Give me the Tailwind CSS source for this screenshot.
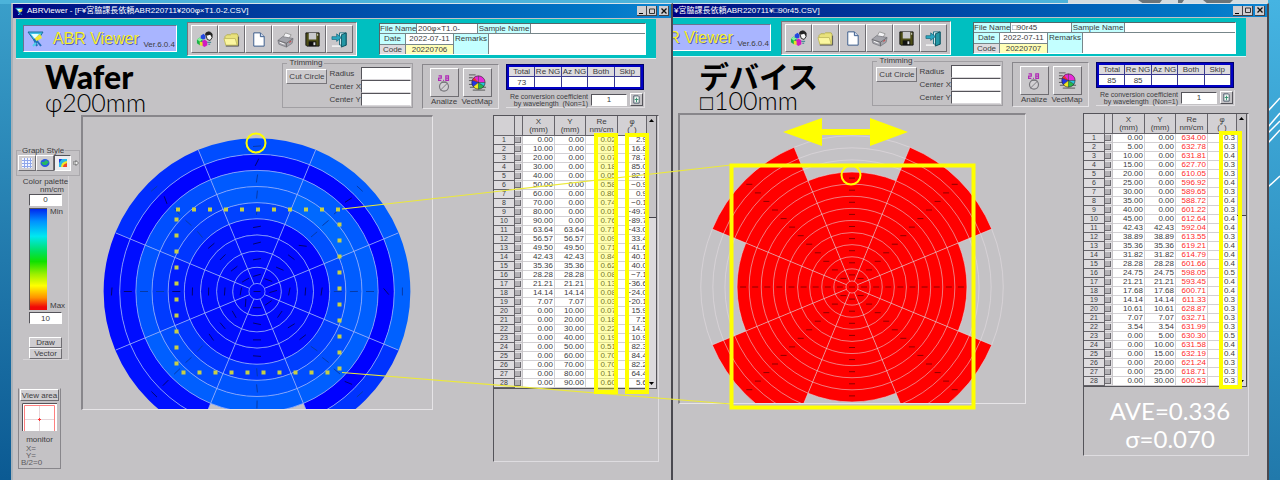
<!DOCTYPE html>
<html lang="ja">
<head>
  <meta charset="UTF-8" />
  <meta name="viewport" content="width=device-width, initial-scale=1.0">
  <title>ABR Viewer</title>
  <script src="https://cdn.jsdelivr.net/npm/@tailwindcss/browser@4"></script>
</head>
<body class="relative min-h-screen overflow-hidden bg-linear-to-b from-[#3a9fca] to-[#0b5a93] font-['Liberation_Sans','Noto_Sans_CJK_JP',sans-serif] text-[8px] leading-[9px] text-[#3c3c40]">

  <!-- slide backdrop -->
  <div class="absolute inset-x-0 top-0 h-[4px] bg-[#4cb3da]"></div>
  <div class="absolute top-0 right-[12px] h-[4px] w-[200px] bg-[#d3dce0]"></div>
  <svg class="absolute top-0 right-0 h-[480px] w-[212px]" viewBox="0 0 212 480">
    <defs><linearGradient id="edge" x1="0" y1="0" x2="0" y2="1"><stop offset="0" stop-color="#45b4e2" /><stop offset="1" stop-color="#2179ab" /></linearGradient></defs>
    <rect x="200" width="12" height="480" fill="url(#edge)" />
    <path d="M200 111l12-13M200 127l12-14M200 133l12-12M200 143l12-13M200 187l12-11" stroke="#fff" stroke-width="1.5" />
    <path d="M70 0h24l-3 4H76zM110 0h6l-2 3h-4zM135 0h30l-4 4h-21z" fill="#6b7478" />
  </svg>

  <svg class="hidden">
    <symbol id="logo" viewBox="0 0 18 18">
      <path d="M1 2h15l-7 11z" fill="#3fc4e8" stroke="#1c6d9c" />
      <path d="M4 4h8l-4 5z" fill="#eaffff" /><path d="M7 9l6-5 2 4-5 3z" fill="#f2e63a" />
      <path d="M7 9l3 7M10 11l4 5" stroke="#1f6fb8" stroke-width="2" /><path d="M6 16l3-3" stroke="#4fd0ea" stroke-width="2" />
    </symbol>
    <symbol id="ic-data" viewBox="0 0 18 18">
      <path d="M1 9l3-2 3 2v4l-3 2-3-2z" fill="#19b34a" /><path d="M1 9l3-2 3 2-3 2z" fill="#8af0a0" />
      <path d="M5 5l3-2 2 2v3l-2 1-3-1z" fill="#2347e0" /><path d="M6 11l3-2 3 2v4l-3 2-3-2z" fill="#d11bc0" /><path d="M4 11l3 1v4l-3-1z" fill="#e8e02a" />
      <path d="M10 3q4-4 7 0v4l-2 3-3-1z" fill="#f7f7f7" stroke="#222" /><path d="M10 2q4-3 7 1v4l-2-3-4 1z" fill="#222" /><path d="M12 12h4M13 14h2" stroke="#2a7a8a" />
    </symbol>
    <symbol id="ic-folder" viewBox="0 0 18 18">
      <path d="M2 6l2-2h4l1-1h6l1 2v10H3z" fill="#e9e27c" stroke="#b5ae55" /><path d="M1 8h12l2 7H3z" fill="#fbf6a0" stroke="#c4bd62" /><path d="M3 16h13.500V6" stroke="#555" fill="none" />
    </symbol>
    <symbol id="ic-page" viewBox="0 0 18 18">
      <path d="M4 2h7l4 4v10H4z" fill="#fff" stroke="#36598a" /><path d="M11 2v4h4" fill="#cfdcef" stroke="#36598a" />
    </symbol>
    <symbol id="ic-printer" viewBox="0 0 18 18">
      <path d="M6 7l3-5 6 2-3 5z" fill="#f4f4f6" stroke="#999" /><path d="M1 10l5-4 11 2-1 5-6 4-8-3z" fill="#a3a3aa" stroke="#85858b" />
      <path d="M1 10l9 3 7-5M10 13v4" fill="none" stroke="#6b6b70" /><path d="M3 12l5 2" stroke="#fff" /><path d="M13 12l2-1" stroke="#d33" />
    </symbol>
    <symbol id="ic-save" viewBox="0 0 18 18">
      <path d="M2 2h14v14H3l-1-1z" fill="#4d4d16" stroke="#111" /><path d="M5 2h8v7H5z" fill="#c9c9cc" /><path d="M5 11h8v5H5z" fill="#111" /><path d="M10 12h2v3h-2z" fill="#ddd" /><path d="M14 3h1v2h-1z" fill="#ddd" />
    </symbol>
    <symbol id="ic-exit" viewBox="0 0 18 18">
      <path d="M9 2h7v13H9z" fill="#e8fbff" stroke="#1b6f80" /><path d="M11 4l5-2v13l-5 2z" fill="#2397a5" stroke="#0d4f5c" /><path d="M1 6h5V3l5 4-5 4V9H1z" fill="#2ba7c0" stroke="#14647a" stroke-width=".7" /><path d="M1 16h9" stroke="#f8f8f8" stroke-width="1.500" />
    </symbol>
    <symbol id="ic-analize" viewBox="0 0 20 22">
      <path d="M4 3h3v2.500H4V8h3M9 8h1M12 3h3v5h-3zM12 5.500h3" fill="none" stroke="#b02ab5" stroke-width="1.300" />
      <circle cx="10" cy="15" r="5" fill="#d2d0d3" stroke="#77767b" stroke-width="1.300" /><path d="M6 19l8-8M7 10h6" stroke="#77767b" />
    </symbol>
    <symbol id="ic-vect" viewBox="0 0 20 20">
      <path d="M1 2h7M1 5h4M1 8h4M1 12h5M2 15h6M5 18h13M15 15h4" stroke="#555" />
      <path d="M11 10V3a7 7 0 0 1 7 7z" fill="#e62ad8" /><path d="M11 10L4.500 7.500A7 7 0 0 1 11 3z" fill="#e62ad8" /><path d="M11 10L5.500 14.500A7 7 0 0 1 4.500 7.500z" fill="#2233e6" /><path d="M11 10L4.500 7.500l2-3z" fill="#e33" />
      <path d="M11 10v7a7 7 0 0 1-5.500-2.500z" fill="#f3ea22" /><path d="M11 10l6 4a7 7 0 0 1-6 3z" fill="#23b84a" /><path d="M11 10h7a7 7 0 0 1-1 4z" fill="#26c7dd" />
      <path d="M11 3v14M4.500 7.500L11 10h7M5.500 14.500L11 10l6 4" stroke="#222" stroke-width=".5" fill="none" />
      <circle cx="11" cy="10" r="7" fill="none" stroke="#222" stroke-width=".6" />
    </symbol>
    <symbol id="ic-calc" viewBox="0 0 10 10">
      <path d="M2 1h5l1 1v7H2z" fill="#eef5f0" stroke="#456" /><path d="M3 5h4M5 3v5" stroke="#2f8f6a" />
    </symbol>
  </svg>

  <main id="windows" class="relative grid h-screen grid-cols-[662fr_596fr] pt-[3px] pr-[11px] pl-[11px]"></main>

  <!-- annotations laid over both windows -->
  <svg class="pointer-events-none absolute top-0 left-0 h-[480px] w-[1280px]" viewBox="0 0 1280 480" fill="none" stroke="#ffff00">
    <g stroke="#c8cf45" stroke-width="4">
      <path d="M176 209.500H342" stroke-dasharray="4 12" />
      <path d="M339.500 222.500V372" stroke-dasharray="4 12" />
      <path d="M181.500 372.500H331" stroke-dasharray="4 12" />
      <path d="M176.500 217.500V367" stroke-dasharray="4 12" />
    </g>
    <path d="M342 209L731 165M342 372.500L731 404" stroke="#ece93a" stroke-width="1.200" />
    <circle cx="256" cy="143" r="9.500" stroke-width="2" />
    <circle cx="851" cy="175" r="9.500" stroke-width="2" />
    <rect x="731.500" y="165.500" width="242" height="242" stroke-width="4" />
    <path d="M783 132l39-14v11h48v-11l38 14-38 14v-11h-48v11z" fill="#ffff00" stroke="none" />
    <rect x="596" y="135" width="20" height="257" fill="#ffff00" fill-opacity=".3" stroke-width="4" />
    <rect x="627" y="135" width="20" height="257" stroke-width="4" />
    <rect x="1221" y="133" width="19" height="254" stroke-width="4" />
  </svg>

  <script>
    const wafer = {
      id: "w",
      frame: "pr-[12px] pl-[3px]",
      titleText: "ABRViewer - [F¥宮脇課長依頼ABR220711¥200φ×T1.0-2.CSV]",
      titlePad: "-mr-[12px] -ml-[3px] pl-[2px] h-[14px]",
      icon: true,
      headH: "h-[40px]",
      formW: "w-[267px]",
      heading: "Wafer", headingClass: "font-['Lato'] text-[32px] leading-[32px] font-black text-black",
      sub: "φ200mm", headPad: "pl-[29px] pt-[2px]",
      toolsH: "h-[56px]",
      file: "200φ×T1.0-", code: "20220706", counts: ["73", "", "", "", ""],
      sidebar: true,
      graphBox: "w-[352px] h-[295px]",
      listH: "h-[347px]",
      red: false, note: ""
    };
    const device = {
      id: "d",
      frame: "pr-[18px] pl-0",
      titleText: "¥宮脇課長依頼ABR220711¥□90r45.CSV]",
      titlePad: "-mr-[18px] pl-[1px] h-[13px]",
      icon: false,
      headH: "h-[39px]",
      formW: "w-[263px]",
      heading: "デバイス", headingClass: "font-['Noto_Sans_CJK_JP'] text-[30px] leading-[32px] font-bold text-black",
      sub: "□100mm", headPad: "pl-[26px] pt-[2px]",
      toolsH: "h-[56px]",
      file: "□90r45", code: "20220707", counts: ["85", "85", "", "", ""],
      sidebar: false,
      graphBox: "w-[348px] h-[291px]",
      listH: "h-[343px]",
      red: true, note: "AVE=0.336<br>σ=0.070"
    };

    wafer.rows = `0.00 0.00 0.02 2.9|10.00 0.00 0.01 16.8|20.00 0.00 0.07 78.7|30.00 0.00 0.18 85.0|40.00 0.00 0.05 82.1|50.00 0.00 0.58 −0.9|60.00 0.00 0.80 0.9|70.00 0.00 0.74 −0.1|80.00 0.00 0.01 −49.7|90.00 0.00 0.76 −89.7|63.64 63.64 0.71 −43.0|56.57 56.57 0.09 33.4|49.50 49.50 0.71 41.6|42.43 42.43 0.84 40.1|35.36 35.36 0.62 40.0|28.28 28.28 0.08 −7.1|21.21 21.21 0.13 −36.6|14.14 14.14 0.08 −24.0|7.07 7.07 0.03 −20.1|0.00 10.00 0.07 15.9|0.00 20.00 0.18 7.5|0.00 30.00 0.22 14.7|0.00 40.00 0.19 10.9|0.00 50.00 0.51 82.3|0.00 60.00 0.70 84.4|0.00 70.00 0.70 82.2|0.00 80.00 0.17 64.4|0.00 90.00 0.60 5.6`;
    device.rows = `0.00 0.00 634.00 0.3|5.00 0.00 632.78 0.3|10.00 0.00 631.81 0.4|15.00 0.00 627.70 0.3|20.00 0.00 610.05 0.3|25.00 0.00 596.92 0.4|30.00 0.00 589.65 0.3|35.00 0.00 588.72 0.4|40.00 0.00 601.22 0.3|45.00 0.00 612.64 0.4|42.43 42.43 592.04 0.4|38.89 38.89 613.55 0.3|35.36 35.36 619.21 0.4|31.82 31.82 614.79 0.4|28.28 28.28 601.66 0.4|24.75 24.75 598.05 0.5|21.21 21.21 593.45 0.4|17.68 17.68 600.71 0.4|14.14 14.14 611.33 0.3|10.61 10.61 628.87 0.3|7.07 7.07 632.71 0.3|3.54 3.54 631.99 0.3|0.00 5.00 630.30 0.5|0.00 10.00 631.58 0.4|0.00 15.00 632.19 0.4|0.00 20.00 621.24 0.3|0.00 25.00 618.71 0.3|0.00 30.00 600.53 0.3`;

    const polar = (cx, cy, r, deg) => {
      const a = deg * Math.PI / 180;
      return `${(cx + r * Math.cos(a)).toFixed(1)} ${(cy - r * Math.sin(a)).toFixed(1)}`;
    };

    function wedge(cx, cy, r0, r1, deg, fill) {
      const a = deg - 22.5, b = deg + 22.5;
      return `<path fill="${fill}" d="M${polar(cx, cy, r0, a)}L${polar(cx, cy, r1, a)}A${r1} ${r1} 0 0 0 ${polar(cx, cy, r1, b)}L${polar(cx, cy, r0, b)}A${r0} ${r0} 0 0 1 ${polar(cx, cy, r0, a)}z"/>`;
    }

    function tick(cx, cy, r, deg, tilt, len, color) {
      const [x, y] = polar(cx, cy, r, deg).split(" ").map(Number);
      const dx = len / 2 * Math.cos(tilt * Math.PI / 180), dy = len / 2 * Math.sin(tilt * Math.PI / 180);
      return `<path stroke="${color}" d="M${(x - dx).toFixed(1)} ${(y + dy).toFixed(1)}L${(x + dx).toFixed(1)} ${(y - dy).toFixed(1)}"/>`;
    }

    function waferMap() {
      const cx = 174, cy = 174.5, p = 16.15;
      // retardation per sector, ring 1 (inner) to 9 (outer), counter-clockwise from east
      const re = [
        [.01, .07, .12, .05, .58, .72, .74, .01, .76],
        [.03, .08, .06, .03, .62, .82, .71, .03, .71],
        [.07, .1, .12, .12, .51, .7, .7, .1, .6],
        [.08, .1, .16, .14, .42, .5, .62, .02, .35],
        [.07, .1, .1, .12, .22, .46, .66, .1, .08],
        [.05, .07, .1, .12, .42, .6, .74, .1, .13],
        [.05, .04, .07, .1, .42, .66, .74, null, null],
        [.04, .08, .1, .1, .48, .6, .74, .01, .4]
      ];
      const phi = [
        [16, 78, 85, 82, 0, 1, 0, -50, -90],
        [-20, -24, -36, -7, 40, 40, 41, 33, -43],
        [16, 8, 15, 10, 82, 84, 82, 64, 5],
        [30, 38, 45, 40, -50, -42, -48, -70, 40],
        [80, 86, 88, 88, 0, 0, 0, 0, 86],
        [85, -60, -50, -55, 48, 42, 44, 45, -45],
        [0, -12, 0, -5, -85, -84, 88, 0, 0],
        [35, 55, 32, 38, -35, -38, -40, -22, 42]
      ];
      let s = `<circle cx="${cx}" cy="${cy}" r="9" fill="#0008ff"/>`, t = "";
      re.forEach((ring, k) => ring.forEach((v, i) => {
        if (v === null) return;
        s += wedge(cx, cy, p * (i + .5), p * (i + 1.5), k * 45, `rgb(0,${Math.round(v * 128)},255)`);
        t += tick(cx, cy, p * (i + 1), k * 45, phi[k][i], 8, v > .3 ? "#073aa6" : "#04046e");
      }));
      let g = "";
      for (let i = 0; i < 9; i++) g += `<circle cx="${cx}" cy="${cy}" r="${p * (i + .5)}"/>`;
      for (let k = 0; k < 8; k++) g += `<path d="M${polar(cx, cy, 8, k * 45 + 22.5)}L${polar(cx, cy, 153, k * 45 + 22.5)}"/>`;
      return s + `<g fill="none" stroke="#9db4ff" stroke-opacity=".75">${g}</g>` + t + tick(cx, cy, 0, 0, 0, 7, "#04046e");
    }

    function deviceMap() {
      const cx = 172, cy = 172, p = 12.1;
      let s = `<circle cx="${cx}" cy="${cy}" r="7" fill="#f00"/>`, t = "", g = "";
      for (let i = 0; i < 13; i++) g += `<circle cx="${cx}" cy="${cy}" r="${p * (i + .5)}"/>`;
      for (let k = 0; k < 8; k++) {
        const n = k % 2 ? 12 : 9;
        s += wedge(cx, cy, 6, p * (n + .5), k * 45, "#f00");
        g += `<path d="M${polar(cx, cy, 6, k * 45 + 22.5)}L${polar(cx, cy, 151, k * 45 + 22.5)}"/>`;
        for (let i = 1; i <= n; i++) t += tick(cx, cy, p * i, k * 45, 0, 6, "#8c0000");
      }
      return s + `<g fill="none" stroke="#e6dfe3" stroke-opacity=".55">${g}</g>` + t + tick(cx, cy, 0, 0, 0, 6, "#8c0000");
    }

    const toolButton = (icon, name) => `
      <button aria-label="${name}" class="flex h-[28px] w-[27px] items-center justify-center border border-t-white border-r-[#6f6d72] border-b-[#6f6d72] border-l-white bg-[#c9c7ca]">
        <svg class="size-[17px]"><use href="#${icon}" /></svg>
      </button>`;

    const field = (w, key, label) => `
      <div class="flex items-center justify-between">
        <label for="${w.id}-${key}" class="whitespace-nowrap">${label}</label>
        <input id="${w.id}-${key}" class="h-[13px] w-[50px] shrink-0 border border-t-[#55545a] border-r-white border-b-[#d8d6d9] border-l-[#55545a] bg-white" />
      </div>`;

    const header = w => `
      <header class="${w.headH} mt-px mr-[3px] flex items-start justify-end overflow-hidden border-b border-[#e3f4f4] bg-[#00bfc0] pt-[3px] pr-[10px]">
        <div class="mt-[3px] mr-[10px] flex h-[27px] w-[154px] shrink-0 items-center border border-t-[#6b7390] border-r-white border-b-white border-l-[#6b7390] bg-[#a9b5ff] pl-[3px]">
          <svg class="size-[18px]"><use href="#logo" /></svg>
          <span class="ml-[8px] text-[16px] leading-[20px] text-[#f5f02a] [text-shadow:1px_1px_0_#5660b0]">ABR Viewer</span>
          <span class="mt-[11px] ml-auto pr-px text-[8px]">Ver.6.0.4</span>
        </div>
        <div class="mr-[22px] flex h-[34px] shrink-0 items-center border border-t-[#77757a] border-r-white border-b-white border-l-[#77757a] bg-[#c4c2c5] px-[3px]">
          ${toolButton("ic-data", "Data")}${toolButton("ic-folder", "Open")}${toolButton("ic-page", "New")}${toolButton("ic-printer", "Print")}${toolButton("ic-save", "Save")}${toolButton("ic-exit", "Exit")}
        </div>
        <form class="${w.formW} mt-px flex shrink-0 flex-col gap-px border border-t-[#55666a] border-r-white border-b-white border-l-[#55666a] bg-[#77868a]">
          <div class="flex h-[9px] gap-px">
            <label for="${w.id}-file" class="w-[36px] shrink-0 bg-[#c3ffff] text-center whitespace-nowrap">File Name</label>
            <input id="${w.id}-file" value="${w.file}" class="w-[60px] bg-white pl-px" />
            <label for="${w.id}-sample" class="w-[52px] shrink-0 bg-[#c3ffff] text-center whitespace-nowrap">Sample Name</label>
            <input id="${w.id}-sample" class="min-w-0 flex-1 bg-white" />
          </div>
          <div class="flex h-[20px] gap-px">
            <div class="grid w-[73px] shrink-0 grid-cols-[25px_47px] grid-rows-2 gap-px">
              <label for="${w.id}-date" class="bg-[#c3ffff] text-center">Date</label>
              <input id="${w.id}-date" value="2022-07-11" class="w-full bg-white text-center" />
              <label for="${w.id}-code" class="bg-[#dedcdf] text-center">Code</label>
              <input id="${w.id}-code" value="${w.code}" class="w-full bg-[#ffffb8] text-center" />
            </div>
            <label for="${w.id}-remarks" class="w-[34px] shrink-0 bg-[#c3ffff] text-center">Remarks</label>
            <textarea id="${w.id}-remarks" class="min-w-0 flex-1 resize-none bg-white"></textarea>
          </div>
        </form>
      </header>`;

    const tools = w => `
      <div class="${w.toolsH} flex items-start pr-[14px]">
        <div class="min-w-0 flex-1 ${w.headPad}">
          <h1 class="${w.headingClass}">${w.heading}</h1>
          <p class="font-['Lato','Noto_Sans_CJK_JP',sans-serif] text-[25px] leading-[18px] font-light text-black">${w.sub}</p>
        </div>
        <fieldset class="mr-[9px] h-[49px] w-[130px] border border-[#a19fa3] pr-px pl-[3px]">
          <legend class="ml-px px-[2px] leading-[8px]">Trimming</legend>
          <div class="flex gap-[2px]">
            <button class="mt-[2px] h-[15px] w-[41px] shrink-0 border border-t-white border-r-[#77757a] border-b-[#77757a] border-l-white bg-[#cccacd]">Cut Circle</button>
            <div class="flex-1">${field(w, "radius", "Radius")}${field(w, "cx", "Center X")}${field(w, "cy", "Center Y")}</div>
          </div>
        </fieldset>
        <div class="mt-[5px] mr-[7px] flex h-[45px] w-[77px] justify-center gap-[3px] border border-t-[#88868b] border-r-[#e6e4e7] border-b-[#e6e4e7] border-l-[#88868b] pt-[3px]">
          <button class="flex w-[30px] flex-col items-center">
            <span class="flex size-[29px] items-center justify-center border border-t-white border-r-[#6f6d72] border-b-[#6f6d72] border-l-white bg-[#c9c7ca]"><svg class="h-[20px] w-[18px]"><use href="#ic-analize" /></svg></span>
            <span>Analize</span>
          </button>
          <button class="flex w-[30px] flex-col items-center">
            <span class="flex size-[29px] items-center justify-center border border-t-white border-r-[#6f6d72] border-b-[#6f6d72] border-l-white bg-[#c9c7ca]"><svg class="size-[19px]"><use href="#ic-vect" /></svg></span>
            <span>VectMap</span>
          </button>
        </div>
        <div class="mt-[5px] w-[139px]">
          <div class="mr-px h-[26px] border border-[#00006a] bg-[#0000c4] px-[2px] pt-[2px]">
            <table class="w-full table-fixed border-separate border-spacing-0 text-center">
              <tr>${["Total", "Re NG", "Az NG", "Both", "Skip"].map(h => `<th class="h-[10px] border-r border-b border-[#3a3a90] bg-[#dddbde] p-0 font-normal whitespace-nowrap">${h}</th>`).join("")}</tr>
              <tr>${w.counts.map(c => `<td class="h-[10px] border-r border-[#3a3a90] bg-white p-0">${c}</td>`).join("")}</tr>
            </table>
          </div>
          <div class="mt-[2px] flex h-[16px] items-center justify-end gap-[3px] border-r border-b border-[#e0dee1] pr-px">
            <label for="${w.id}-coef" class="text-right text-[7px] leading-[7px] whitespace-nowrap">Re conversion coefficient<br>by wavelength&nbsp; (Non=1)</label>
            <input id="${w.id}-coef" value="1" class="h-[12px] w-[36px] shrink-0 border border-t-[#55545a] border-r-white border-b-white border-l-[#55545a] bg-white text-center" />
            <button aria-label="Apply" class="flex size-[13px] shrink-0 items-center justify-center border border-t-white border-r-[#55545a] border-b-[#55545a] border-l-white"><svg class="size-[9px]"><use href="#ic-calc" /></svg></button>
          </div>
        </div>
      </div>`;

    const sidebar = w => `
      <aside class="flex w-[65px] shrink-0 flex-col items-start pt-[31px]">
        <fieldset class="h-[30px] w-[62px] border border-[#aaa8ac] pl-px">
          <legend class="ml-[3px] px-px leading-[9px]">Graph Style</legend>
          <div class="flex items-center">
            <button aria-label="Grid" class="flex h-[16px] w-[18px] items-center justify-center border border-t-white border-r-[#6f6d72] border-b-[#6f6d72] border-l-white bg-[#cfcdd0]"><svg class="size-[10px]" viewBox="0 0 10 10"><path d="M0 0h10v10H0z" fill="#f2f5ff" /><path d="M0 2.500h10M0 5.500h10M0 8.500h10M2.500 0v10M5.500 0v10M8.500 0v10" stroke="#8fa6ea" /></svg></button>
            <button aria-label="Disc" class="flex h-[16px] w-[18px] items-center justify-center border border-t-white border-r-[#6f6d72] border-b-[#6f6d72] border-l-white bg-[#cfcdd0]"><svg class="size-[10px]" viewBox="0 0 10 10"><ellipse cx="5" cy="5" rx="4.500" ry="4" fill="#2a5ae0" /><path d="M1 4h3l2-2 3 2-3 3H3z" fill="#25b863" /></svg></button>
            <button aria-label="Contour" class="flex h-[16px] w-[17px] items-center justify-center border border-t-[#55545a] border-r-white border-b-white border-l-[#55545a] bg-[#ececef]"><svg class="size-[10px]" viewBox="0 0 10 10"><path d="M1 1h8v8H1z" fill="#26b8e8" /><path d="M1 1h3L1 5z" fill="#2038e0" /><path d="M3 9q0-5 6-6v6z" fill="#f0e62a" /><path d="M5 9q0-3 4-4v4z" fill="#f0452a" /></svg></button>
            <svg class="ml-[2px] size-[6px]" viewBox="0 0 6 6"><path d="M0 2h3V.5L5.500 3 3 5.500V4H0z" fill="#eee" stroke="#555" stroke-width=".7" /></svg>
          </div>
        </fieldset>
        <section class="ml-[7px] flex h-[184px] w-[46px] flex-col items-center border-r border-b border-[#d6d4d7] pt-[2px]">
          <h2 class="leading-[8px] whitespace-nowrap">Color palette</h2>
          <p class="self-end pr-[4px] leading-[8px]">nm/cm</p>
          <input aria-label="Min value" value="0" class="h-[12px] w-[33px] border border-t-[#55545a] border-r-white border-b-white border-l-[#55545a] bg-white text-center" />
          <div class="my-[2px] flex h-[103px] w-[37px] gap-[3px] pl-[2px]">
            <div class="w-[18px] shrink-0 border-t border-l border-[#55545a] [background-image:linear-gradient(#0028ee,#0090ff_12%,#00e8f0_27%,#00e060_42%,#10e000_52%,#a0f000_65%,#ffff00_76%,#ff9000_88%,#f00808_97%)]"></div>
            <div class="flex flex-col justify-between leading-[8px]"><span>Min</span><span>Max</span></div>
          </div>
          <input aria-label="Max value" value="10" class="h-[12px] w-[33px] border border-t-[#55545a] border-r-white border-b-white border-l-[#55545a] bg-white text-center" />
          <button class="mt-[13px] h-[11px] w-[33px] border border-t-white border-r-[#6f6d72] border-b-[#6f6d72] border-l-white bg-[#cfcdd0]">Draw</button>
          <button class="h-[11px] w-[33px] border border-t-white border-r-[#6f6d72] border-b-[#6f6d72] border-l-white bg-[#cfcdd0]">Vector</button>
        </section>
        <section class="mt-[28px] ml-[2px] flex h-[81px] w-[43px] flex-col items-center border border-t-transparent border-r-[#88868b] border-b-[#88868b] border-l-[#88868b]">
          <button class="h-[12px] w-[39px] border border-t-white border-r-[#6f6d72] border-b-[#6f6d72] border-l-white bg-[#cfcdd0] whitespace-nowrap">View area</button>
          <svg class="mt-[2px] h-[28px] w-[35px] shrink-0" viewBox="0 0 35 28"><path d="M0 0h35v28H0z" fill="#fff" /><path d="M.5 28V.5h35" stroke="#55545a" fill="none" /><path d="M2.500 28V2.500h30V28" fill="none" stroke="#ff8080" /><path d="M3 16.500h29M17.500 3v25" stroke="#e6d6da" /><path d="M16 16.500h3M17.500 15v3" stroke="#f33" /></svg>
          <p class="mt-[4px]">monitor</p>
          <p class="mt-px w-full pl-[2px] leading-[7px] text-[#5d5b60]"><span class="pl-[5px]">X=</span><br><span class="pl-[5px]">Y=</span><br>B/2=0</p>
        </section>
      </aside>`;

    const dataRow = (w, r, i) => `
      <tr class="text-right">
        <th class="h-[9px] border-r border-b border-[#66646a] bg-[#dfdde0] p-0 text-center text-[7px] leading-[8px] font-normal">${i + 1}</th>
        <td class="border-r border-b border-[#c8c6c9] bg-[#e4e2e5] p-0"><button aria-label="Row ${i + 1}" class="block h-[6px] w-[6px] border-r border-b border-[#6f6d72] bg-[#b4b2b6]"></button></td>
        <td class="border-r border-b border-[#d2d0d3] bg-white p-0 pr-px leading-[8px]">${r[0]}</td>
        <td class="border-r border-b border-[#d2d0d3] bg-white p-0 pr-px leading-[8px]">${r[1]}</td>
        <td class="border-r border-b border-[#d2d0d3] bg-white p-0 pr-px leading-[8px] ${w.red ? "text-[#ff2a2a]" : ""}">${r[2]}</td>
        <td class="border-b border-[#d2d0d3] bg-white p-0 leading-[8px] ${w.red ? "pr-[2px]" : ""}">${r[3]}</td>
      </tr>`;

    const list = w => `
      <section class="${w.listH} ml-auto w-[166px] shrink-0 border border-t-[#55545a] border-r-[#dedce0] border-b-[#dedce0] border-l-[#55545a]">
        <div class="mr-px flex border-r border-b border-[#55545a]">
          <table class="min-w-0 flex-1 table-fixed border-separate border-spacing-0">
            <colgroup><col class="w-[21px]"><col class="w-[8px]"><col class="w-[32px]"><col class="w-[31px]"><col class="w-[32px]"><col></colgroup>
            <thead>
              <tr>${["", "", "X<br>(mm)", "Y<br>(mm)", "Re<br>nm/cm", "φ<br>(ﾟ)"].map(h => `<th class="h-[20px] border-r border-b border-[#66646a] bg-[#d3d1d4] p-0 leading-[8px] font-normal">${h}</th>`).join("")}</tr>
            </thead>
            <tbody>${w.rows.split("|").map((r, i) => dataRow(w, r.split(" "), i)).join("")}</tbody>
          </table>
          <div class="flex w-[9px] flex-col items-center justify-between bg-[#dcdadd]">
            <div class="flex h-[102px] w-full flex-col items-center border-b border-[#44434a] bg-[#c6c4c7] pt-[3px]"><svg class="h-[3px] w-[5px]" viewBox="0 0 5 3"><path d="M2.500 0L5 3H0z" /></svg></div>
            <svg class="mb-[3px] h-[3px] w-[5px]" viewBox="0 0 5 3"><path d="M0 0h5L2.500 3z" /></svg>
          </div>
        </div>
        ${w.note ? `<p class="mt-[10px] pl-[8px] text-center font-['Lato',sans-serif] text-[24px] leading-[28px] text-white">${w.note}</p>` : ""}
      </section>`;

    const viewer = w => `
      <section class="${w.frame} flex min-w-0 flex-col overflow-hidden border-t border-r-2 border-t-[#d8e4ea] border-r-[#4a4950] ${w.icon ? "border-l-2 border-l-[#a8b2ba]" : ""} bg-[#c4c2c5]">
        <div class="${w.titlePad} flex shrink-0 items-center gap-[3px] bg-linear-to-r from-[#000080] to-[#1084d0] pr-[2px] text-white">
          ${w.icon ? `<svg class="size-[9px]"><use href="#logo" /></svg>` : ""}
          <span class="flex-1 leading-[12px] whitespace-nowrap">${w.titleText}</span>
          <div class="flex">
            <button aria-label="Minimize" class="flex h-[10px] w-[10px] items-end border-r border-b border-[#44434a] bg-[#d0ced1] pb-px pl-[2px]"><svg class="h-px w-[4px]"><path d="M0 0h4v1H0z" /></svg></button>
            <button aria-label="Maximize" class="mr-[2px] flex h-[10px] w-[10px] items-center justify-center border-r border-b border-[#44434a] bg-[#d0ced1]"><svg class="size-[6px]" viewBox="0 0 6 6"><path d="M.5 1h5v4.500h-5z" fill="none" stroke="#333" /></svg></button>
            <button aria-label="Close" class="flex h-[10px] w-[10px] items-center justify-center border-r border-b border-[#44434a] bg-[#d0ced1]"><svg class="size-[6px]" viewBox="0 0 6 6"><path d="M.5.5l5 5M5.500.5l-5 5" stroke="#111" stroke-width="1.300" /></svg></button>
          </div>
        </div>
        ${header(w)}
        ${tools(w)}
        <div class="flex items-start ${w.sidebar ? "" : "pl-[5px]"}">
          ${w.sidebar ? sidebar(w) : ""}
          <svg class="${w.graphBox} shrink-0 border-t-2 border-r border-b border-l-2 border-t-[#88868b] border-r-[#e6e4e7] border-b-[#e6e4e7] border-l-[#88868b]" viewBox="${w.red ? "0 0 345 288" : "0 0 349 292"}">${w.red ? deviceMap() : waferMap()}</svg>
          ${list(w)}
        </div>
      </section>`;

    document.getElementById("windows").innerHTML = viewer(wafer) + viewer(device);
  </script>
</body>
</html>
